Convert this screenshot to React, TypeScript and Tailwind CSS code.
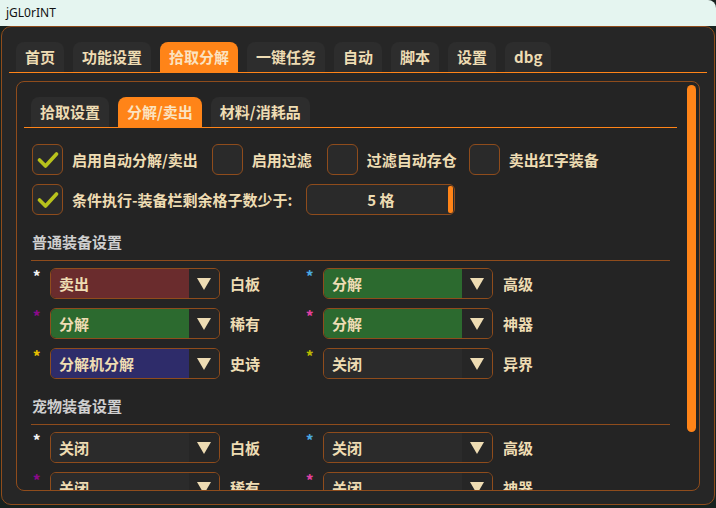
import React from 'react';

const FONT = { fontFamily: '"Noto Sans CJK SC", "Noto Sans", sans-serif' };

const mainTabs = ['首页', '功能设置', '拾取分解', '一键任务', '自动', '脚本', '设置', 'dbg'];
const subTabs = ['拾取设置', '分解/卖出', '材料/消耗品'];

type Row = {
  star: string;
  value: string;
  fill: string;
  label: string;
};

const normalRows: [Row, Row][] = [
  [
    { star: 'text-[#f2f2f2]', value: '卖出', fill: 'bg-[#6a2c2d]', label: '白板' },
    { star: 'text-[#4aa8e0]', value: '分解', fill: 'bg-[#2c6a2f]', label: '高级' },
  ],
  [
    { star: 'text-[#8a0a8a]', value: '分解', fill: 'bg-[#2c6a2f]', label: '稀有' },
    { star: 'text-[#e040a0]', value: '分解', fill: 'bg-[#2c6a2f]', label: '神器' },
  ],
  [
    { star: 'text-[#e8c000]', value: '分解机分解', fill: 'bg-[#2e2c6a]', label: '史诗' },
    { star: 'text-[#b8b800]', value: '关闭', fill: 'bg-[#2b2b2b]', label: '异界' },
  ],
];

const petRows: [Row, Row][] = [
  [
    { star: 'text-[#f2f2f2]', value: '关闭', fill: 'bg-[#2b2b2b]', label: '白板' },
    { star: 'text-[#4aa8e0]', value: '关闭', fill: 'bg-[#2b2b2b]', label: '高级' },
  ],
  [
    { star: 'text-[#8a0a8a]', value: '关闭', fill: 'bg-[#2b2b2b]', label: '稀有' },
    { star: 'text-[#e040a0]', value: '关闭', fill: 'bg-[#2b2b2b]', label: '神器' },
  ],
];

function Tab({ label, active }: { label: string; active?: boolean }) {
  return (
    <div
      className={`flex h-[30px] items-center rounded-t-[8px] px-[9px] text-[15px] font-bold leading-[20px] ${
        active ? 'bg-[#ff8418] text-[#fbe3c0]' : 'bg-[#2d2d2d] text-[#eedcb3]'
      }`}
    >
      {label}
    </div>
  );
}

function Checkbox({ checked }: { checked?: boolean }) {
  return (
    <div className="flex h-[31px] w-[31px] shrink-0 items-center justify-center rounded-[6px] border border-[#8f4c1c] bg-[#2a2a2a]">
      {checked ? (
        <svg width="22" height="18" viewBox="0 0 22 18">
          <path d="M2.5 9 L8.5 15 L19.5 3" fill="none" stroke="#b8c21c" strokeWidth="3.6" strokeLinecap="round" strokeLinejoin="round" />
        </svg>
      ) : null}
    </div>
  );
}

function Check({ label, checked, gap }: { label: string; checked?: boolean; gap: string }) {
  return (
    <div className={`flex items-center gap-[9px] ${gap}`}>
      <Checkbox checked={checked} />
      <span className="whitespace-nowrap text-[15px] font-bold leading-[20px] text-[#eedcb3]">{label}</span>
    </div>
  );
}

function Select({ row }: { row: Row }) {
  return (
    <div className="flex w-[273px] items-start">
      <span className={`w-[19px] pl-[2px] text-[14px] font-black leading-[14px] ${row.star}`}>*</span>
      <div className="flex h-[31px] w-[170px] overflow-hidden rounded-[6px] border border-[#8f4c1c]">
        <div className={`flex flex-1 items-center pl-[8px] text-[15px] font-bold leading-[20px] text-[#eedcb3] ${row.fill}`}>
          {row.value}
        </div>
        <div className="flex w-[30px] items-center justify-center bg-[#262626]">
          <svg width="14" height="12" viewBox="0 0 14 12">
            <polygon points="0,0 14,0 7,12" fill="#eedcb3" />
          </svg>
        </div>
      </div>
      <span className="ml-[10px] self-center text-[15px] font-bold leading-[20px] text-[#eedcb3]">{row.label}</span>
    </div>
  );
}

function Section({ title, rows }: { title: string; rows: [Row, Row][] }) {
  return (
    <div className="mt-[17px]">
      <div className="pl-[8px] text-[15px] font-bold leading-[20px] text-[#cfcfcf]">{title}</div>
      <div className="ml-[7px] mr-[14px] mt-[8px] h-px bg-[#8f4c1c]" />
      <div className="mt-[7px] flex flex-col gap-[9px] pl-[7px]">
        {rows.map((pair, i) => (
          <div key={i} className="flex">
            <Select row={pair[0]} />
            <Select row={pair[1]} />
          </div>
        ))}
      </div>
    </div>
  );
}

export default function App() {
  return (
    <div className="flex h-[508px] w-[716px] flex-col overflow-hidden bg-[#18221f]" style={FONT}>
      <div className="flex h-[26px] shrink-0 items-center rounded-tr-[8px] bg-[#e5f5f0] pl-[6px] text-[12px] text-[#111]" style={{ fontFamily: '"Noto Sans", sans-serif' }}>
        jGL0rINT
      </div>

      <div className="mx-[1px] flex h-[479px] flex-col rounded-[10px] border border-[#8f4c1c] bg-[#262626] px-[7px] pt-[15px]">
        <div className="flex gap-[9px] border-b border-[#ff8418] pl-[7px]">
          {mainTabs.map((t) => (
            <Tab key={t} label={t} active={t === '拾取分解'} />
          ))}
        </div>

        <div className="relative mx-[7px] mt-[8px] h-[410px] overflow-hidden rounded-[8px] border border-[#8f4c1c] bg-[#242424] px-[7px] pt-[15px]">
          <div className="absolute right-[3px] top-[3px] h-[347px] w-[9px] rounded-full bg-[#ff8418]" />

          <div className="mr-[15px]">
            <div className="flex gap-[9px] border-b border-[#ff8418] pl-[7px]">
              {subTabs.map((t) => (
                <Tab key={t} label={t} active={t === '分解/卖出'} />
              ))}
            </div>

            <div className="mt-[16px] flex flex-col gap-[9px] pl-[8px]">
              <div className="flex items-center">
                <Check label="启用自动分解/卖出" checked gap="mr-[14px]" />
                <Check label="启用过滤" gap="mr-[15px]" />
                <Check label="过滤自动存仓" gap="mr-[12px]" />
                <Check label="卖出红字装备" gap="" />
              </div>
              <div className="flex items-center">
                <Check label="条件执行-装备栏剩余格子数少于:" checked gap="mr-[14px]" />
                <div className="relative flex h-[31px] w-[149px] items-center justify-center rounded-[6px] border border-[#8f4c1c] bg-[#2a2a2a] text-[15px] font-bold leading-[20px] text-[#eedcb3]">
                  5 格
                  <div className="absolute right-[1px] top-[1px] h-[27px] w-[5px] rounded-[2px] bg-[#ff8418]" />
                </div>
              </div>
            </div>
          </div>

          <div className="mr-[8px]">
            <Section title="普通装备设置" rows={normalRows} />
            <Section title="宠物装备设置" rows={petRows} />
          </div>
        </div>
      </div>
    </div>
  );
}
